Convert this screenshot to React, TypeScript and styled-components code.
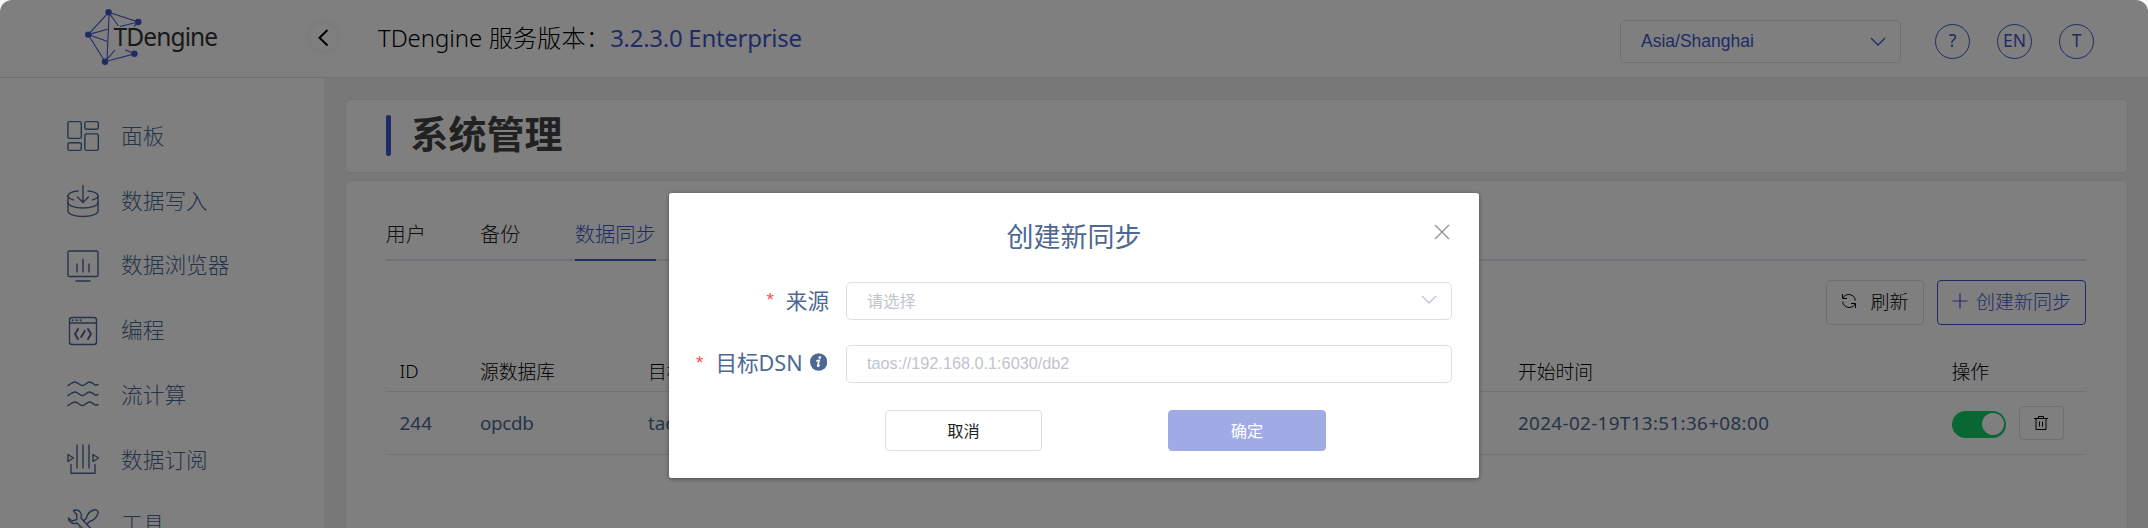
import React from "react";
import styled, { createGlobalStyle } from "styled-components";

const color = {
  primary: "#4157cd",
  text: "#4c6893",
  ink: "#000",
  border: "#dcdfe6",
  placeholder: "#c0c4cc",
};

const uiFont = `"Noto Sans", "Noto Sans CJK SC", sans-serif`;
const formFont = `"Liberation Sans", "Noto Sans CJK SC", sans-serif`;

const GlobalStyle = createGlobalStyle`
  * { box-sizing: border-box; }
  body { margin: 0; background: #f8f8f8; overflow: hidden; }
  button { font: inherit; padding: 0; background: transparent; }
`;

const Screen = styled.div`
  position: relative;
  height: 528px;
  border-radius: 12px 12px 0 0;
  overflow: hidden;
  background: #fff;
  display: flex;
  flex-direction: column;
  font-family: ${uiFont};
  font-weight: 300;
  white-space: nowrap;
`;

/* ---------- header ---------- */

const Header = styled.header`
  flex: none;
  height: 78px;
  border-bottom: 1px solid #e4e4e4;
  display: flex;
  align-items: flex-start;
`;

const Brand = styled.div`
  width: 310px;
  height: 77px;
  padding-left: 82px;
  display: flex;
`;

const BrandMark = styled.svg`
  flex: none;
  width: 64px;
  height: 76px;
`;

const BrandName = styled.span`
  margin: 20px 0 0 -32.5px;
  font-size: 24.5px;
  line-height: 34px;
  font-weight: 400;
  letter-spacing: -0.88px;
  color: #333;
`;

const CollapseButton = styled.button`
  flex: none;
  width: 27px;
  height: 27px;
  margin-top: 24px;
  border: 0;
  border-radius: 50%;
  background: #fff;
  box-shadow: 0 0 8px rgba(0, 0, 0, 0.08);
  display: flex;
`;

const Version = styled.div`
  flex: 1;
  margin-left: 41px;
  padding-top: 20px;
  font-size: 24px;
  line-height: 36px;
  color: ${color.ink};
  display: flex;
`;

const ProductLabel = styled.span`
  letter-spacing: -0.1px;
`;

const VersionLabel = styled.span`
  letter-spacing: 0.3px;
`;

const VersionNumber = styled.span`
  font-weight: 400;
  letter-spacing: -0.28px;
  color: ${color.primary};
`;

const ZoneSelect = styled.div`
  width: 281px;
  height: 43px;
  margin-top: 20px;
  padding: 0 14px 0 20px;
  border: 1px solid ${color.border};
  border-radius: 5px;
  display: flex;
  align-items: center;
  justify-content: space-between;
  font-family: ${formFont};
  font-weight: 400;
  font-size: 17.5px;
  color: ${color.primary};
`;

const RoundButtons = styled.div`
  margin: 24px 54px 0 34px;
  display: flex;
  gap: 27px;
`;

const RoundButton = styled.button`
  width: 35px;
  height: 35px;
  border: 1.4px solid ${color.primary};
  border-radius: 50%;
  color: ${color.primary};
  font-size: 17.5px;
  line-height: 30px;
  font-weight: 400;
  display: flex;
  justify-content: center;
`;

/* ---------- body ---------- */

const Body = styled.div`
  flex: 1;
  min-height: 0;
  display: flex;
`;

const Sidebar = styled.nav`
  flex: none;
  width: 324px;
  padding-top: 26px;
  background: #fff;
  box-shadow: 0 0 12px rgba(0, 0, 0, 0.05);
`;

const NavItem = styled.a`
  height: 64.75px;
  padding-left: 66px;
  display: flex;
  align-items: center;
  gap: 21px;
  color: ${color.text};
`;

const NavLabel = styled.span`
  padding-bottom: 4px;
  font-size: 21.7px;
`;

const NavIcon = styled.svg`
  flex: none;
  width: 34px;
  height: 34px;
  fill: none;
  stroke: ${color.text};
  stroke-width: 1.4;
  stroke-linecap: round;
  stroke-linejoin: round;
`;

const Main = styled.main`
  flex: 1;
  padding: 21px 20px 0 20.5px;
  background: #f1f1f1;
  display: flex;
  flex-direction: column;
  gap: 7px;
`;

const Card = styled.section`
  flex: none;
  background: #fff;
  border: 1px solid #e6e6e6;
  border-radius: 5px;
`;

const TitleCard = styled(Card)`
  height: 74px;
  padding: 15px 0 0 40px;
  display: flex;
  gap: 20px;
`;

const TitleAccent = styled.div`
  width: 5px;
  height: 41px;
  border-radius: 2px;
  background: ${color.primary};
`;

const PageTitle = styled.h1`
  margin: -2px 0 0;
  font-size: 38px;
  line-height: 41px;
  font-weight: 700;
  color: #424242;
`;

const ContentCard = styled(Card)`
  height: 400px;
  padding: 27px 41px 0 40px;
`;

const Tabs = styled.div`
  height: 53px;
  border-bottom: 2px solid #e0e5ee;
  display: flex;
  gap: 54px;
  font-size: 20.3px;
`;

const Tab = styled.div<{ $active?: boolean }>`
  height: 53px;
  padding-top: 11px;
  line-height: 30px;
  color: ${(p) => (p.$active ? color.primary : "#222")};
  border-bottom: 2px solid ${(p) => (p.$active ? color.primary : "transparent")};
`;

const Toolbar = styled.div`
  margin-top: 19px;
  display: flex;
  justify-content: flex-end;
  gap: 13px;
`;

const ToolButton = styled.button<{ $primary?: boolean }>`
  width: ${(p) => (p.$primary ? 149 : 98)}px;
  height: 45px;
  padding-bottom: 4px;
  border: 1px solid ${(p) => (p.$primary ? color.primary : color.border)};
  border-radius: 4px;
  color: ${(p) => (p.$primary ? color.primary : color.ink)};
  display: flex;
  align-items: center;
  justify-content: center;
  gap: ${(p) => (p.$primary ? 8 : 13)}px;
  font-size: 19px;
`;

const Row = styled.div<{ $head?: boolean }>`
  height: ${(p) => (p.$head ? 67 : 63)}px;
  padding: ${(p) => (p.$head ? "25px" : "0")} 0 0 14px;
  border-bottom: 1px solid #e3e6ee;
  display: grid;
  grid-template-columns: 80.5px 168px 870px 433.5px 1fr;
  align-items: center;
  font-size: 18.8px;
  color: ${(p) => (p.$head ? color.ink : color.text)};
`;

const Cell = styled.div<{ $regular?: boolean; $spacing?: number }>`
  font-weight: ${(p) => (p.$regular ? 400 : 300)};
  letter-spacing: ${(p) => p.$spacing ?? 0}px;
`;

const Actions = styled.div`
  display: flex;
  align-items: center;
  gap: 13px;
`;

const Toggle = styled.div`
  width: 54px;
  height: 27px;
  margin-top: 2px;
  padding: 2px;
  border-radius: 14px;
  background: #13ce66;
  display: flex;
  justify-content: flex-end;
`;

const Knob = styled.div`
  width: 22px;
  height: 22px;
  border-radius: 50%;
  background: #fff;
`;

const DeleteButton = styled.button`
  width: 45px;
  height: 34px;
  border: 1px solid ${color.border};
  border-radius: 4px;
  display: flex;
  align-items: center;
  justify-content: center;
`;

/* ---------- dialog ---------- */

const Overlay = styled.div`
  position: absolute;
  inset: 0;
  padding-top: 193px;
  background: rgba(0, 0, 0, 0.5);
  display: flex;
  justify-content: center;
  align-items: flex-start;
`;

const Dialog = styled.div`
  width: 810px;
  height: 285px;
  padding: 0 27px;
  border-radius: 2.5px;
  background: #fff;
  box-shadow: 0 1px 4px rgba(0, 0, 0, 0.4);
  color: ${color.text};
`;

const DialogHeader = styled.div`
  height: 89px;
  display: grid;
  grid-template-columns: 1fr auto 1fr;
  align-items: start;
`;

const DialogTitle = styled.h2`
  grid-column: 2;
  margin: 24px 0 0;
  font-size: 27px;
  line-height: 40px;
  font-weight: 400;
`;

const CloseIcon = styled.svg`
  justify-self: end;
  width: 16px;
  height: 16px;
  margin: 31px 2px 0 0;
`;

const Field = styled.div`
  height: 38px;
  margin-bottom: 25px;
  display: grid;
  grid-template-columns: 133px 606px;
  column-gap: 17px;
`;

const FieldLabel = styled.label<{ $raised?: boolean }>`
  height: ${(p) => (p.$raised ? 33 : 34)}px;
  display: flex;
  align-items: center;
  justify-content: flex-end;
  font-size: 21.6px;
  font-weight: 400;
`;

const Required = styled.span`
  margin: 2px 12px 0 0;
  font-family: "Liberation Sans", sans-serif;
  font-size: 19px;
  color: #ff4949;
`;

const Control = styled.div`
  padding: 0 14px 2px 20px;
  border: 1px solid ${color.border};
  border-radius: 5px;
  display: flex;
  align-items: center;
  justify-content: space-between;
  font-family: ${formFont};
  font-weight: 400;
  font-size: 16.25px;
  color: ${color.placeholder};
`;

const InfoIcon = styled.svg`
  width: 20px;
  height: 20px;
  margin: 0 2px 0 7px;
`;

const DialogFooter = styled.div`
  margin-top: 27px;
  padding-left: 189px;
  display: flex;
  gap: 126px;
`;

const DialogButton = styled.button<{ $primary?: boolean }>`
  width: ${(p) => (p.$primary ? 158 : 157)}px;
  height: 41px;
  padding-bottom: 2px;
  border: 1px solid ${(p) => (p.$primary ? "#a0abe6" : color.border)};
  border-radius: 4px;
  background: ${(p) => (p.$primary ? "#a0abe6" : "#fff")};
  color: ${(p) => (p.$primary ? "#fff" : "#222")};
  font-size: 16.25px;
  font-weight: 400;
`;

const Chevron = ({ stroke }: { stroke: string }) => (
  <svg width="16" height="10" viewBox="0 0 16 10" fill="none" stroke={stroke} strokeWidth="1.3">
    <path d="M1 1l7 7 7-7" />
  </svg>
);

const navItems = [
  {
    label: "面板",
    icon: (
      <>
        <rect x="1.9" y="2.6" width="13.4" height="16.8" rx="1.6" />
        <rect x="18.9" y="2.6" width="13.4" height="7.6" rx="1.6" />
        <rect x="1.9" y="23.8" width="13.4" height="7.6" rx="1.6" />
        <rect x="18.9" y="14.9" width="13.4" height="16.5" rx="1.6" />
      </>
    ),
  },
  {
    label: "数据写入",
    icon: (
      <>
        <path d="M17 1.5v17M11.5 13l5.5 5.5 5.5-5.5" />
        <path d="M12 7C6 7.6 2 9.6 2 12c0 1.5 2 2.8 5.500 3.800M22 7c6 .6 10 2.600 10 5 0 1.500-2 2.800-5.500 3.800" />
        <path d="M2 12v15c0 3 6.500 5.500 15 5.500S32 30 32 27V12" />
        <path d="M2 18.500C2 21.500 8.500 24 17 24s15-2.500 15-5.500" />
      </>
    ),
  },
  {
    label: "数据浏览器",
    icon: (
      <>
        <rect x="2" y="2" width="30" height="25.5" rx="1.6" />
        <path d="M11 15v8M17 10.500v12.500M23 15v8M10 32h14" />
      </>
    ),
  },
  {
    label: "编程",
    icon: (
      <>
        <rect x="3.5" y="3.5" width="27" height="27" rx="2.5" />
        <path d="M4 9h26" />
        <path d="M6.500 6.300h.2M10.500 6.300h.2M14.500 6.300h.2" strokeWidth="2" />
        <path d="M12 15l-3 5 3 5M22 15l3 5-3 5M18.800 17l-3.600 6" strokeWidth="2" />
      </>
    ),
  },
  {
    label: "流计算",
    icon: (
      <>
        {[5.5, 15.5, 25.5].map((y) => (
          <path
            key={y}
            d={`M2 ${y + 2}c3-1.500 4-3.500 7-3.500s4.500 3.500 7.500 3.500 4-3.500 7-3.500 4.500 3 6.500 3.200q1 0 2-.8`}
          />
        ))}
      </>
    ),
  },
  {
    label: "数据订阅",
    icon: (
      <>
        <path d="M11 2v23M17 2v23M23 2v23" />
        <path d="M2 11.500v7l5.500-3.500zM27 11.500v7l5.500-3.500z" />
        <path d="M5 21.500v8.700h24v-8.700" />
      </>
    ),
  },
  {
    label: "工具",
    icon: (
      <>
        <path d="M7.500 2.500c4-1.500 8 1 8 5 0 1-.2 1.800-.6 2.500L29 25c2 2.300-1.500 6-4 4L11 15c-4 1.800-8.500-1-8.700-5l4 3 4.500-1.500V7z" />
        <path d="M17.500 13l3-3c.5-3 3-6.500 7-8 3-1 5.500 1.200 4.300 4-1.600 4-5 6.700-8 7.300l-3 3M13.500 20L5 29.500" />
      </>
    ),
  },
];

const logoNodes = [
  [26.6, 12.3],
  [56.3, 22],
  [6.2, 34.6],
  [52.4, 53.8],
  [23, 61.7],
];

export default function App() {
  return (
    <>
      <GlobalStyle />
      <Screen>
        <Header>
          <Brand>
            <BrandMark viewBox="0 0 64 76" fill={color.primary} stroke={color.primary}>
              <path
                fill="none"
                strokeWidth="1.1"
                d="M26.600 12.300L56.300 22L38 26.500M26.600 12.300L6.200 34.600L23 61.700L52.400 53.800L43 49.800M27.200 12.300L25 60M26.600 12.300L36.500 26M6.200 34.600L25.500 29.300M6.200 34.600L25 41.300M23 61.700L33 50M56.300 22L52 26.500"
              />
              {logoNodes.map(([x, y]) => (
                <circle key={y} cx={x} cy={y} r="3.2" stroke="none" />
              ))}
            </BrandMark>
            <BrandName>TDengine</BrandName>
          </Brand>
          <CollapseButton aria-label="collapse">
            <svg width="27" height="27" fill="none" stroke="#000" strokeWidth="2">
              <path d="M17.500 6L9.500 13.700l8 7.800" />
            </svg>
          </CollapseButton>
          <Version>
            <ProductLabel>TDengine</ProductLabel>
            <VersionLabel>&nbsp;服务版本：</VersionLabel>
            <VersionNumber>3.2.3.0 Enterprise</VersionNumber>
          </Version>
          <ZoneSelect>
            Asia/Shanghai
            <Chevron stroke={color.primary} />
          </ZoneSelect>
          <RoundButtons>
            <RoundButton>?</RoundButton>
            <RoundButton>EN</RoundButton>
            <RoundButton>T</RoundButton>
          </RoundButtons>
        </Header>

        <Body>
          <Sidebar>
            {navItems.map((item) => (
              <NavItem key={item.label}>
                <NavIcon viewBox="0 0 34 34">{item.icon}</NavIcon>
                <NavLabel>{item.label}</NavLabel>
              </NavItem>
            ))}
          </Sidebar>
          <Main>
            <TitleCard>
              <TitleAccent />
              <PageTitle>系统管理</PageTitle>
            </TitleCard>
            <ContentCard>
              <Tabs>
                <Tab>用户</Tab>
                <Tab>备份</Tab>
                <Tab $active>数据同步</Tab>
              </Tabs>
              <Toolbar>
                <ToolButton>
                  <svg width="16" height="18" viewBox="0 0 16 18" fill="none" stroke="#000" strokeWidth="1">
                    <path d="M1.500 2v4.500H6M1.800 6.300C4 1.500 11 .8 14 6.500v2M14.500 16v-4.500H10M14.200 11.700C12 16.500 5 17.200 2 11.500v-2" />
                  </svg>
                  刷新
                </ToolButton>
                <ToolButton $primary>
                  <svg width="16" height="16" fill="none" stroke={color.primary} strokeWidth="1.2">
                    <path d="M8 .5v15M.5 8h15" />
                  </svg>
                  创建新同步
                </ToolButton>
              </Toolbar>
              <Row $head>
                <Cell>ID</Cell>
                <Cell>源数据库</Cell>
                <Cell>目标</Cell>
                <Cell>开始时间</Cell>
                <Cell>操作</Cell>
              </Row>
              <Row>
                <Cell $regular $spacing={0.1}>244</Cell>
                <Cell $regular $spacing={-0.3}>opcdb</Cell>
                <Cell $regular>taos</Cell>
                <Cell $regular $spacing={0.38}>2024-02-19T13:51:36+08:00</Cell>
                <Actions>
                  <Toggle>
                    <Knob />
                  </Toggle>
                  <DeleteButton aria-label="delete">
                    <svg width="16" height="16" fill="none" stroke="#000" strokeWidth="1">
                      <path d="M1 3.500h14M5.500 3.500v-2h5v2M3 3.500v11h10v-11M6.500 6.500v5M9.500 6.500v5" />
                    </svg>
                  </DeleteButton>
                </Actions>
              </Row>
            </ContentCard>
          </Main>
        </Body>

        <Overlay>
          <Dialog role="dialog">
            <DialogHeader>
              <DialogTitle>创建新同步</DialogTitle>
              <CloseIcon viewBox="0 0 16 16" stroke="#909399" strokeWidth="1.4">
                <path d="M1 1l14 14M15 1L1 15" />
              </CloseIcon>
            </DialogHeader>
            <Field>
              <FieldLabel>
                <Required>*</Required>来源
              </FieldLabel>
              <Control>
                请选择
                <Chevron stroke={color.placeholder} />
              </Control>
            </Field>
            <Field>
              <FieldLabel $raised>
                <Required>*</Required>目标DSN
                <InfoIcon viewBox="0 0 20 20">
                  <circle cx="10" cy="10" r="10" fill={color.text} />
                  <circle cx="11.3" cy="4.9" r="1.5" fill="#fff" />
                  <path
                    d="M7.300 9.200c1-.8 2.200-1.200 3.200-1.200l-1.600 6.300c-.2.900.7.800 2.300-.6"
                    fill="none"
                    stroke="#fff"
                    strokeWidth="1.9"
                  />
                </InfoIcon>
              </FieldLabel>
              <Control>taos://192.168.0.1:6030/db2</Control>
            </Field>
            <DialogFooter>
              <DialogButton>取消</DialogButton>
              <DialogButton $primary>确定</DialogButton>
            </DialogFooter>
          </Dialog>
        </Overlay>
      </Screen>
    </>
  );
}
